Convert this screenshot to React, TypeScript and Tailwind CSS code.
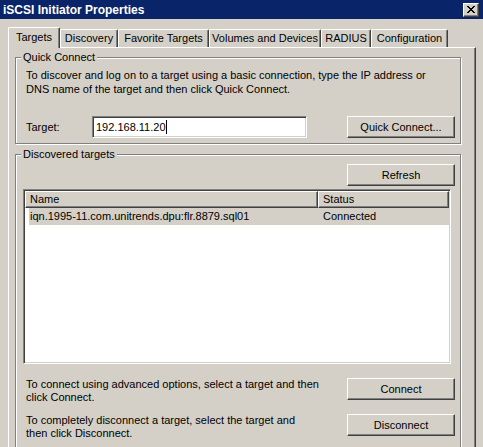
const tabs = [
  { label: "Discovery", w: "w-[58px]" },
  { label: "Favorite Targets", w: "w-[91px]" },
  { label: "Volumes and Devices", w: "w-[112px]" },
  { label: "RADIUS", w: "w-[50px]" },
  { label: "Configuration", w: "w-[77px]" },
];

function Button({ children, className = "" }: { children: React.ReactNode; className?: string }) {
  return (
    <button
      type="button"
      className={
        "flex items-center justify-center h-[22px] w-[108px] shrink-0 bg-[#d4d0c8] text-black border border-t-white border-l-white border-r-[#404040] border-b-[#404040] shadow-[inset_-1px_-1px_0_#808080] " +
        className
      }
    >
      {children}
    </button>
  );
}

function GroupBox({ title, children, className = "" }: { title: string; children: React.ReactNode; className?: string }) {
  return (
    <fieldset
      className={
        "w-[446px] border border-[#808080] shadow-[inset_1px_1px_0_#fff,1px_1px_0_#fff] p-0 m-0 min-w-0 " + className
      }
    >
      <legend className="ml-[5px] px-[2px] leading-[13px] bg-[#d4d0c8] relative">{title}</legend>
      {children}
    </fieldset>
  );
}

export default function App() {
  return (
    <div className="w-[483px] h-[447px] overflow-hidden bg-[#d4d0c8] text-black text-[11px] font-['Liberation_Sans',Arial,sans-serif] select-none">
      {/* Title bar */}
      <div className="h-[19px] bg-[#0a246a] flex items-center justify-between pl-[3px] pr-[4px]">
        <span className="text-white font-bold text-[12px] leading-[14px]">iSCSI Initiator Properties</span>
        <div className="w-[16px] h-[14px] bg-[#d4d0c8] border border-t-white border-l-white border-r-[#404040] border-b-[#404040] shadow-[inset_-1px_-1px_0_#808080] flex items-center justify-center">
          <svg width="8" height="7" viewBox="0 0 8 7" shapeRendering="crispEdges">
            <path d="M0 0h2v1h-2zM6 0h2v1h-2zM1 1h2v1h-2zM5 1h2v1h-2zM2 2h4v1h-4zM3 3h2v1h-2zM2 4h4v1h-4zM1 5h2v1h-2zM5 5h2v1h-2zM0 6h2v1h-2zM6 6h2v1h-2z" fill="#000" />
          </svg>
        </div>
      </div>

      {/* Tabs */}
      <div className="mt-[8px] h-[20px] pl-[8px] flex items-end">
        <div className="relative z-10 h-[21px] -mb-[1px] w-[52px] bg-[#d4d0c8] border-t border-l border-r border-t-white border-l-white border-r-[#404040] shadow-[inset_-1px_0_0_#808080] rounded-t-[2px] pt-[3px] text-center leading-[13px]">
          Targets
        </div>
        {tabs.map((t) => (
          <div
            key={t.label}
            className={
              t.w +
              " h-[18px] border-t border-l border-r border-t-white border-l-white border-r-[#404040] shadow-[inset_-1px_0_0_#808080] rounded-t-[2px] pt-[2px] text-center leading-[13px] whitespace-nowrap"
            }
          >
            {t.label}
          </div>
        ))}
      </div>

      {/* Panel */}
      <div className="ml-[8px] w-[468px] h-[420px] border-t border-l border-r border-t-white border-l-white border-r-[#404040] shadow-[inset_-1px_0_0_#808080] pt-[3px] pl-[6px]">
        <GroupBox title="Quick Connect">
          <div className="pl-[10px] pr-[5px] pb-[5px]">
            <p className="mt-[4px] leading-[14px] whitespace-nowrap">
              To discover and log on to a target using a basic connection, type the IP address or
              <br />
              DNS name of the target and then click Quick Connect.
            </p>
            <div className="mt-[20px] flex items-center">
              <span className="w-[66px]">Target:</span>
              <div className="w-[215px] h-[22px] bg-white border border-t-[#808080] border-l-[#808080] border-r-white border-b-white shadow-[inset_1px_1px_0_#404040,inset_-1px_-1px_0_#d4d0c8] flex items-center pl-[3px]">
                <span>192.168.11.20</span>
                <span className="w-[1px] h-[14px] bg-black" />
              </div>
              <Button className="ml-auto">Quick Connect...</Button>
            </div>
          </div>
        </GroupBox>

        <GroupBox title="Discovered targets" className="mt-[4px] h-[320px]">
          <div className="pl-[7px] pr-[5px]">
            <div className="flex justify-end mt-[3px]">
              <Button>Refresh</Button>
            </div>
            <div className="mt-[3px] w-[428px] h-[175px] bg-white border border-t-[#808080] border-l-[#808080] border-r-white border-b-white shadow-[inset_1px_1px_0_#404040,inset_-1px_-1px_0_#d4d0c8] p-[1px]">
              <div className="flex h-[17px] bg-[#d4d0c8] leading-[13px]">
                <div className="w-[293px] border border-t-white border-l-white border-r-[#404040] border-b-[#404040] shadow-[inset_-1px_-1px_0_#808080] pl-[4px] pt-[1px]">
                  Name
                </div>
                <div className="flex-1 border border-t-white border-l-white border-r-[#404040] border-b-[#404040] shadow-[inset_-1px_-1px_0_#808080] pl-[4px] pt-[1px]">
                  Status
                </div>
              </div>
              <div className="ml-[4px] h-[17px] bg-[#d4d0c8] flex items-center">
                <span className="w-[289px] pl-[1px]">iqn.1995-11.com.unitrends.dpu:flr.8879.sql01</span>
                <span className="pl-[5px]">Connected</span>
              </div>
            </div>

            <div className="mt-[14px] flex items-start">
              <p className="pl-[3px] leading-[13px] whitespace-nowrap">
                To connect using advanced options, select a target and then
                <br />
                click Connect.
              </p>
              <Button className="ml-auto">Connect</Button>
            </div>
            <div className="mt-[10px] flex items-start">
              <p className="pl-[3px] leading-[13px] whitespace-nowrap">
                To completely disconnect a target, select the target and
                <br />
                then click Disconnect.
              </p>
              <Button className="ml-auto">Disconnect</Button>
            </div>
          </div>
        </GroupBox>
      </div>
    </div>
  );
}
